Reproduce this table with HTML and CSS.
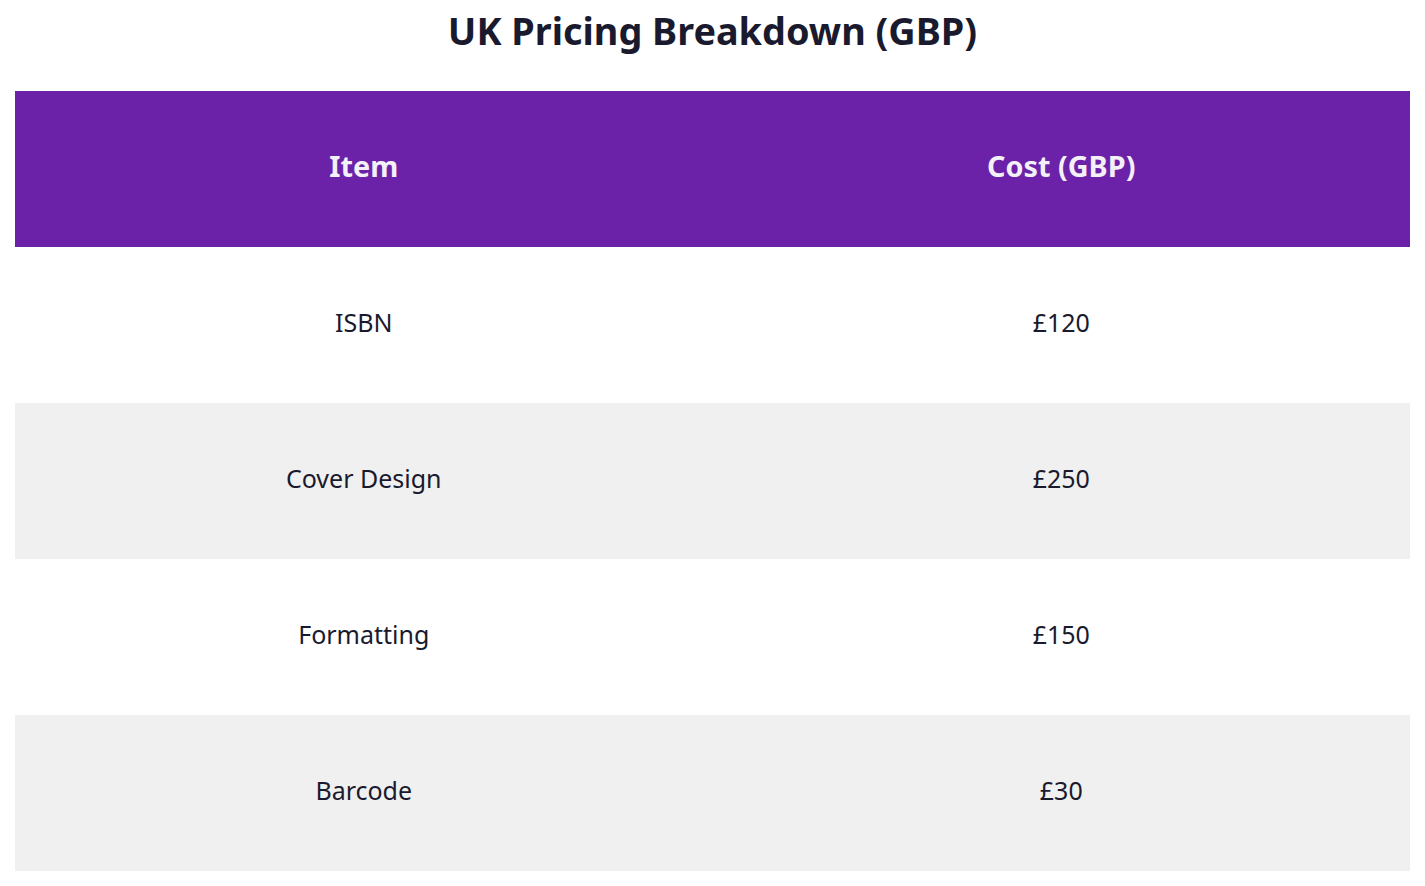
FILE: index.html
```html
<!DOCTYPE html>
<html lang="en">
<head>
<meta charset="utf-8">
<title>UK Pricing Breakdown (GBP)</title>
<link rel="stylesheet" href="styles.css">
</head>
<body>
<main class="page">
  <h1 class="title">UK Pricing Breakdown (GBP)</h1>
  <table class="pricing">
    <thead>
      <tr><th>Item</th><th>Cost (GBP)</th></tr>
    </thead>
    <tbody>
      <tr><td>ISBN</td><td>£120</td></tr>
      <tr><td>Cover Design</td><td>£250</td></tr>
      <tr><td>Formatting</td><td>£150</td></tr>
      <tr><td>Barcode</td><td>£30</td></tr>
    </tbody>
  </table>
</main>
</body>
</html>
```
FILE: styles.css
```css
html, body {
  margin: 0;
  padding: 0;
  background: #ffffff;
}
body {
  font-family: "Noto Sans", "DejaVu Sans", sans-serif;
  color: #1a1a2e;
}
.page {
  padding: 6px 15px 15px;
}
.title {
  margin: 0 0 36px;
  text-align: center;
  font-size: 37.8px;
  font-weight: 700;
  line-height: 49px;
  color: #1a1a2e;
}
.pricing {
  width: 100%;
  border-collapse: collapse;
  table-layout: fixed;
}
.pricing th,
.pricing td {
  height: 156px;
  box-sizing: border-box;
  padding: 0 0 6px;
  text-align: center;
  vertical-align: middle;
  font-size: 25px;
}
.pricing th {
  background: #6b21a8;
  color: #f3f0f7;
  font-weight: 700;
  font-size: 28.8px;
  padding-bottom: 8px;
}
.pricing tbody tr:nth-child(even) td {
  background: #f0f0f0;
}
```
